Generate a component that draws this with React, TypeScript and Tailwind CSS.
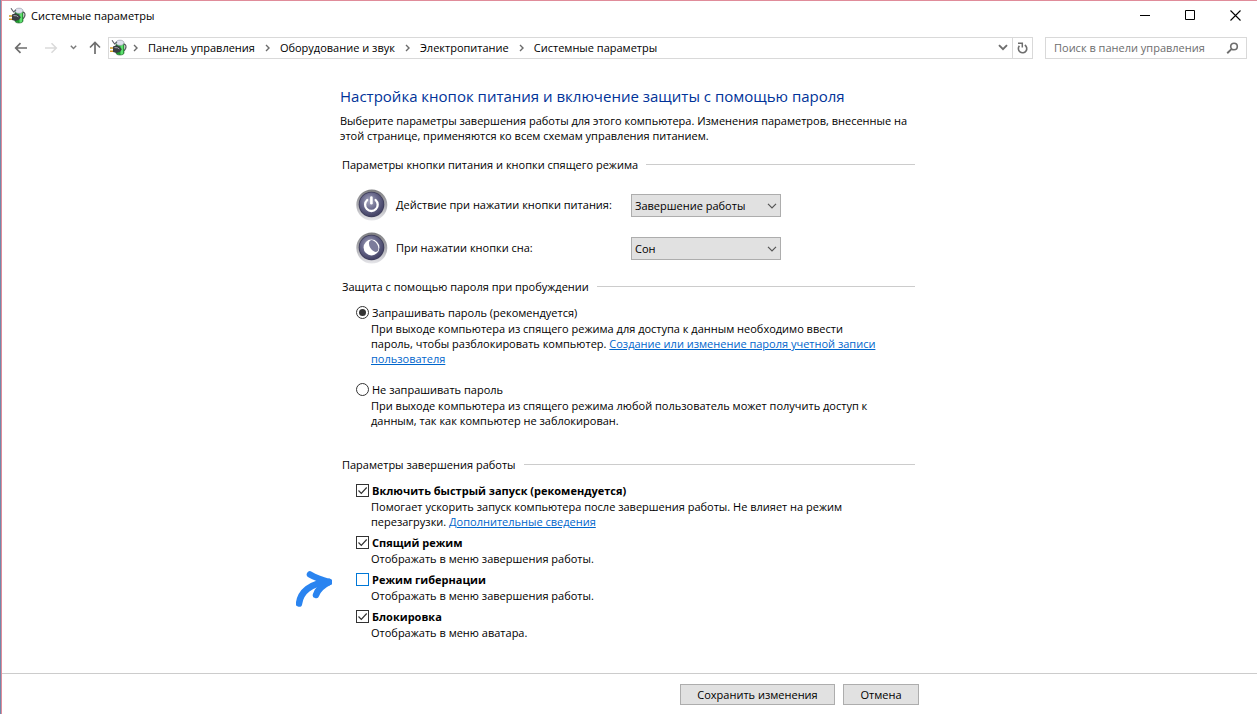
import React, { useId, useState } from "react";

function PowerPlanIcon() {
  return (
    <svg width="17" height="17" viewBox="0 0 17 17" aria-hidden="true" className="shrink-0">
      <path d="M13 5.200c3-.6 3.400 2.300 2.600 4.300l-1.400 2.300" fill="none" stroke="#4d5157" strokeWidth="1.200" />
      <path d="M6 4.500v9.500c0 1.200 1.600 2 4 2s4-.8 4-2V4.500z" fill="#1f9a2e" stroke="#1f5a2a" strokeWidth=".6" />
      <path d="M10.500 5v10.500c1.600 0 2.700-.4 2.700-1.300V5z" fill="#5fe070" />
      <path d="M6 3.800C6 2.200 7.600 1.200 10 1.200s4 1 4 2.600-1.600 2.600-4 2.600-4-1-4-2.600z" fill="#dfe2ee" stroke="#8a8e9c" strokeWidth=".6" />
      <path d="M7 2.800L4.600 5 2 1.200" fill="none" stroke="#5a5d65" strokeWidth="1.100" />
      <path d="M0 9h4M0 12.200h4" stroke="#d09a20" strokeWidth="1.500" />
      <path d="M3 7.500L6.500 6.300l3.500 1.700 1.800 2.200L10 12.700l-3.500 1.300L3 13z" fill="#3a3d42" />
      <path d="M4.500 8.600l3 .2 1.800 1.200" fill="none" stroke="#aeb1b5" strokeWidth=".9" />
    </svg>
  );
}

function RoundBadge({ kind }: { kind: "power" | "sleep" }) {
  const id = useId();
  return (
    <svg width="32" height="32" viewBox="0 0 32 32" aria-hidden="true" className="shrink-0">
      <defs>
        <linearGradient id={id + "rim"} x1="0" y1="0" x2="0" y2="1">
          <stop offset="0" stopColor="#7d7d80" />
          <stop offset=".5" stopColor="#acacb1" />
          <stop offset="1" stopColor="#e6e6ea" />
        </linearGradient>
        <radialGradient id={id + "face"} cx=".42" cy=".36" r=".62">
          <stop offset="0" stopColor="#a9a9c0" />
          <stop offset=".55" stopColor="#6a6a8c" />
          <stop offset="1" stopColor="#454467" />
        </radialGradient>
      </defs>
      <circle cx="15.800" cy="16" r="15.500" fill={`url(#${id}rim)`} />
      <circle cx="15.500" cy="15.500" r="12.800" fill="#3b3a57" />
      <circle cx="15.500" cy="15.500" r="12" fill={`url(#${id}face)`} />
      {kind === "power" ? (
        <g fill="none" stroke="#fff" strokeLinecap="round">
          <path d="M11.200 11a6.300 6.300 0 1 0 8.400 0" strokeWidth="2.300" />
          <path d="M15.400 8.500v5.700" strokeWidth="2.600" />
        </g>
      ) : (
        <>
          <circle cx="15.500" cy="15.500" r="7.900" fill="#fff" />
          <ellipse cx="17.700" cy="14" rx="3.900" ry="6.500" transform="rotate(-32 17.700 14)" fill="#7c7c9b" />
        </>
      )}
    </svg>
  );
}

function Crumb({ children }: { children: string }) {
  return (
    <li className="flex items-center">
      <svg width="5" height="8" viewBox="0 0 5 8" aria-hidden="true" className="mr-2.5">
        <path d="M1 1l3 3-3 3" fill="none" stroke="#6b6b6b" strokeWidth="1.400" />
      </svg>
      <a href="#" className="mr-2.5 whitespace-nowrap">{children}</a>
    </li>
  );
}

function SectionTitle({ children }: { children: string }) {
  return (
    <div className="flex items-center gap-2 pr-1 pl-0.5">
      <h2 className="whitespace-nowrap">{children}</h2>
      <span className="h-px flex-1 bg-[#cccccc]" />
    </div>
  );
}

function ActionRow({ kind, label, options }: { kind: "power" | "sleep"; label: string; options: string[] }) {
  const id = useId();
  return (
    <div className="flex items-center pl-4">
      <RoundBadge kind={kind} />
      <label htmlFor={id} className="ml-2 w-[235px] pb-0.5 whitespace-nowrap">{label}</label>
      <div className="relative">
        <select id={id} className="block h-[23px] w-[150px] appearance-none border border-[#adadad] bg-[#e1e1e1] pr-5 pl-[3px]">
          {options.map((o) => <option key={o}>{o}</option>)}
        </select>
        <svg width="10" height="6" viewBox="0 0 10 6" aria-hidden="true" className="pointer-events-none absolute top-[9px] right-1">
          <path d="M1 .8l4 4 4-4" fill="none" stroke="#555" strokeWidth="1.200" />
        </svg>
      </div>
    </div>
  );
}

function RadioRow({ label, checked, onSelect, children }: {
  label: string; checked: boolean; onSelect: () => void; children: React.ReactNode;
}) {
  return (
    <div className="pl-4">
      <label className="flex items-center gap-[3px]">
        <span className="relative flex">
          <input type="radio" name="wake" checked={checked} onChange={onSelect}
            className="peer size-[13px] appearance-none rounded-full border border-[#333] bg-white" />
          <span className="pointer-events-none absolute inset-[3px] hidden rounded-full bg-[#333] peer-checked:block" />
        </span>
        {label}
      </label>
      <p className="mt-px pl-[15px] whitespace-nowrap">{children}</p>
    </div>
  );
}

function CheckRow({ label, on = false, hot = false, children }: {
  label: string; on?: boolean; hot?: boolean; children: React.ReactNode;
}) {
  return (
    <div className="relative pl-4">
      {hot && (
        <svg width="48" height="44" viewBox="0 0 48 44" aria-hidden="true" className="absolute -top-1 -left-12">
          <defs>
            <filter id="brush"><feGaussianBlur stdDeviation=".7" /></filter>
          </defs>
          <g fill="none" stroke="#2b84f0" strokeWidth="6.500" strokeLinecap="round" strokeLinejoin="round" filter="url(#brush)">
            <path d="M7 35.500C8.500 24 18 15 37 14" />
            <path d="M18 6.500c6 3.500 12 5.500 19 7.500" />
            <path d="M37 14c-6 3-11 7-13 13" />
          </g>
        </svg>
      )}
      <label className="flex items-center gap-[3px] font-bold">
        <span className="relative flex">
          <input type="checkbox" defaultChecked={on}
            className={hot
              ? "peer size-[13px] appearance-none border border-[#0078d7] bg-white"
              : "peer size-[13px] appearance-none border border-[#333] bg-white"} />
          <svg width="13" height="13" viewBox="0 0 13 13" aria-hidden="true"
            className="pointer-events-none absolute inset-0 hidden peer-checked:block">
            <path d="M2.500 6.500l2.800 2.800L10.700 3.500" fill="none" stroke="#333" strokeWidth="1.200" />
          </svg>
        </span>
        {label}
      </label>
      <p className="mt-px pl-[15px] font-normal whitespace-nowrap">{children}</p>
    </div>
  );
}

export default function App() {
  const [ask, setAsk] = useState(true);
  return (
    <div className="flex min-h-screen border-l border-l-[#7088a8] bg-white font-['Open_Sans','Noto_Sans',sans-serif] text-[11px] leading-[15px] text-black">
      <div className="flex min-w-0 flex-1 flex-col border-t border-l border-[#e08c9a]">
        <header className="flex h-[29px] items-center pl-[7px]">
          <PowerPlanIcon />
          <span className="ml-[5px]">Системные параметры</span>
          <div className="ml-auto flex">
            <button aria-label="Свернуть" className="flex h-[29px] w-[45px] items-center justify-center pl-0.5">
              <svg width="11" height="11" viewBox="0 0 11 11"><path d="M0 5.500h10" stroke="#000" /></svg>
            </button>
            <button aria-label="Развернуть" className="flex h-[29px] w-[45px] items-center justify-center pl-0.5">
              <svg width="11" height="11" viewBox="0 0 11 11"><path d="M.5.5h9v9h-9z" fill="none" stroke="#000" /></svg>
            </button>
            <button aria-label="Закрыть" className="flex h-[29px] w-[45px] items-center justify-center pl-0.5">
              <svg width="11" height="11" viewBox="0 0 11 11"><path d="M.5.5l10 10M10.500.5l-10 10" stroke="#000" strokeWidth="1.100" /></svg>
            </button>
          </div>
        </header>

        <nav className="flex h-[35px] items-center pr-2.5 pl-3">
          <button aria-label="Назад" className="mr-4">
            <svg width="14" height="12" viewBox="0 0 14 12"><path d="M13 6H2M6.500 1.200L1.700 6l4.800 4.800" fill="none" stroke="#6e6e6e" strokeWidth="1.700" /></svg>
          </button>
          <button aria-label="Вперёд" className="mr-3">
            <svg width="14" height="12" viewBox="0 0 14 12"><path d="M1 6h11M7.500 1.200L12.300 6l-4.800 4.800" fill="none" stroke="#dadada" strokeWidth="1.500" /></svg>
          </button>
          <button aria-label="Последние расположения" className="mr-3">
            <svg width="7" height="5" viewBox="0 0 7 5"><path d="M.8.8l2.700 2.700L6.200.8" fill="none" stroke="#7a7a7a" strokeWidth="1.400" /></svg>
          </button>
          <button aria-label="Вверх" className="mr-[7px]">
            <svg width="12" height="13" viewBox="0 0 12 13"><path d="M6 13V2M1 6.500l5-5 5 5" fill="none" stroke="#6e6e6e" strokeWidth="1.700" /></svg>
          </button>
          <div className="flex h-[22px] flex-1 items-center border border-[#d9d9d9] pl-px">
            <PowerPlanIcon />
            <ol className="ml-1.5 flex">
              <Crumb>Панель управления</Crumb>
              <Crumb>Оборудование и звук</Crumb>
              <Crumb>Электропитание</Crumb>
              <Crumb>Системные параметры</Crumb>
            </ol>
            <button aria-label="Предыдущие расположения" className="ml-auto flex w-[18px] justify-center">
              <svg width="10" height="7" viewBox="0 0 10 7"><path d="M1 1.200l4 4 4-4" fill="none" stroke="#6e6e6e" strokeWidth="1.900" /></svg>
            </button>
            <button aria-label="Обновить" className="flex h-full w-5 items-center justify-center border-l border-[#d9d9d9]">
              <svg width="11" height="12" viewBox="0 0 11 12">
                <path d="M1 1.300h4.300v4.200" fill="none" stroke="#6e6e6e" strokeWidth="1.500" />
                <path d="M2.400 3.800a4.200 4.200 0 1 0 5.400-.8" fill="none" stroke="#6e6e6e" strokeWidth="1.600" />
              </svg>
            </button>
          </div>
          <div className="ml-3 flex h-[22px] w-[202px] items-center border border-[#d9d9d9] pr-[7px] pl-2">
            <input aria-label="Поиск" placeholder="Поиск в панели управления" className="min-w-0 flex-1 outline-none placeholder:text-[#6d6d6d]" />
            <svg width="13" height="12" viewBox="0 0 13 12" aria-hidden="true" className="shrink-0">
              <circle cx="8" cy="4.500" r="3.300" fill="none" stroke="#6e6e6e" strokeWidth="1.600" />
              <path d="M5.700 6.900L1.200 11.200" stroke="#6e6e6e" strokeWidth="1.900" />
            </svg>
          </div>
        </nav>

        <main className="flex-1 pb-7">
          <div className="mx-auto w-[579px] pt-[21px]">
            <h1 className="text-[15px] leading-5 whitespace-nowrap text-[#003399]">
              Настройка кнопок питания и включение защиты с помощью пароля
            </h1>
            <p className="mt-[7px] whitespace-nowrap">
              Выберите параметры завершения работы для этого компьютера. Изменения параметров, внесенные на<br />
              этой странице, применяются ко всем схемам управления питанием.
            </p>

            <section className="mt-3.5">
              <SectionTitle>Параметры кнопки питания и кнопки спящего режима</SectionTitle>
              <div className="mt-[17px] flex flex-col gap-[11px]">
                <ActionRow kind="power" label="Действие при нажатии кнопки питания:" options={["Завершение работы", "Сон"]} />
                <ActionRow kind="sleep" label="При нажатии кнопки сна:" options={["Сон", "Завершение работы"]} />
              </div>
            </section>

            <section className="mt-[15px]">
              <SectionTitle>Защита с помощью пароля при пробуждении</SectionTitle>
              <div className="mt-[11px] flex flex-col gap-4">
                <RadioRow label="Запрашивать пароль (рекомендуется)" checked={ask} onSelect={() => setAsk(true)}>
                  При выходе компьютера из спящего режима для доступа к данным необходимо ввести<br />
                  пароль, чтобы разблокировать компьютер.{" "}
                  <a href="#" className="text-[#0066cc] underline">Создание или изменение пароля учетной записи<br />пользователя</a>
                </RadioRow>
                <RadioRow label="Не запрашивать пароль" checked={!ask} onSelect={() => setAsk(false)}>
                  При выходе компьютера из спящего режима любой пользователь может получить доступ к<br />
                  данным, так как компьютер не заблокирован.
                </RadioRow>
              </div>
            </section>

            <section className="mt-[29px]">
              <SectionTitle>Параметры завершения работы</SectionTitle>
              <div className="mt-[11px] flex flex-col gap-1.5">
                <CheckRow label="Включить быстрый запуск (рекомендуется)" on>
                  Помогает ускорить запуск компьютера после завершения работы. Не влияет на режим<br />
                  перезагрузки. <a href="#" className="text-[#0066cc] underline">Дополнительные сведения</a>
                </CheckRow>
                <CheckRow label="Спящий режим" on>Отображать в меню завершения работы.</CheckRow>
                <CheckRow label="Режим гибернации" hot>Отображать в меню завершения работы.</CheckRow>
                <CheckRow label="Блокировка" on>Отображать в меню аватара.</CheckRow>
              </div>
            </section>
          </div>
        </main>

        <footer className="border-t border-[#cccccc]">
          <div className="mx-auto flex w-[579px] justify-end gap-2 pt-2.5 pb-[9px]">
            <button className="h-[21px] w-[155px] border border-[#adadad] bg-[#e1e1e1]">Сохранить изменения</button>
            <button className="h-[21px] w-[76px] border border-[#adadad] bg-[#e1e1e1]">Отмена</button>
          </div>
        </footer>
      </div>
    </div>
  );
}
